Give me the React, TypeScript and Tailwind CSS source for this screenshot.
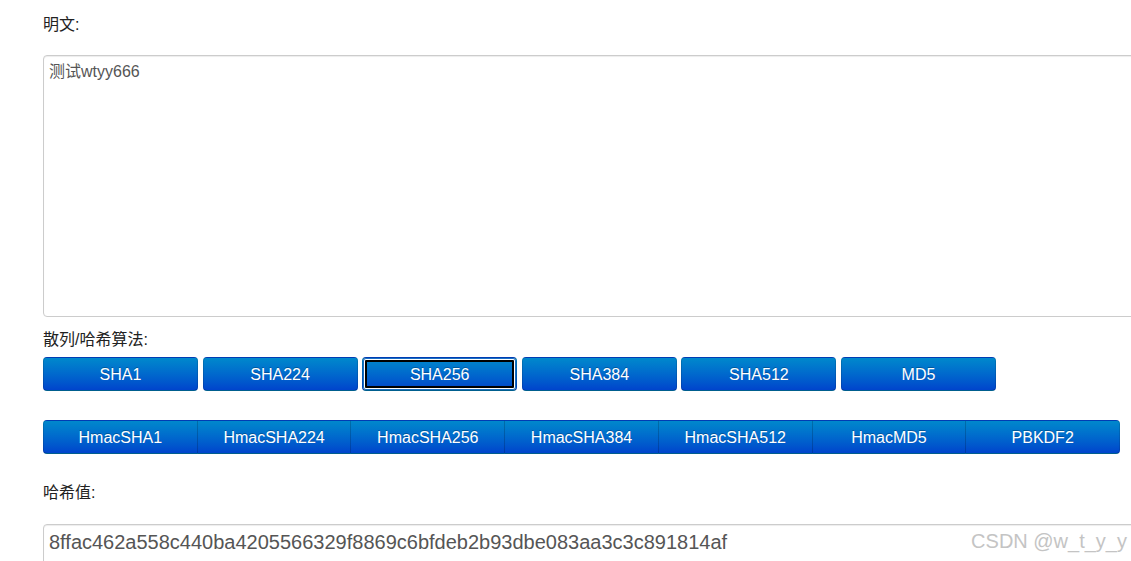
import { useState } from "react"

const algos = ["SHA1", "SHA224", "SHA256", "SHA384", "SHA512", "MD5"]
const hmacs = ["HmacSHA1", "HmacSHA224", "HmacSHA256", "HmacSHA384", "HmacSHA512", "HmacMD5", "PBKDF2"]

const btn =
  "h-[34px] pt-[2px] text-white text-[16px] bg-linear-to-b from-[#0088cc] to-[#0044cc] [text-shadow:0_-1px_0_rgba(0,0,0,0.25)] border border-[rgba(0,0,0,0.12)] border-b-[rgba(0,0,0,0.3)]"

export default function App() {
  const [active, setActive] = useState("SHA256")
  const font = { fontFamily: '"Liberation Sans", Arial, "Noto Sans CJK SC", sans-serif' }

  return (
    <div className="relative w-[1131px] h-[561px] overflow-hidden bg-white text-[#333]" style={font}>
      <div className="pl-[43px] pt-[15px] w-[1200px]">
        {/* 明文 */}
        <div className="text-[16px] leading-[20px] text-[#222]">明文:</div>
        <textarea
          readOnly
          defaultValue="测试wtyy666"
          className="mt-[20px] block w-[1120px] h-[262px] resize-none border border-[#ccc] rounded-[4px] shadow-[inset_0_1px_1px_rgba(0,0,0,0.075)] px-[5px] pt-[6px] text-[16px] leading-[20px] text-[#555] outline-none"
          style={font}
        />

        {/* 算法 */}
        <div className="mt-[13px] text-[16px] leading-[20px] text-[#222]">散列/哈希算法:</div>
        <div className="mt-[7px] flex gap-[4.6px]">
          {algos.map((a) => (
            <button
              key={a}
              onClick={() => setActive(a)}
              className={`${btn} w-[155px] rounded-[4px] ${
                active === a
                  ? "shadow-[inset_0_0_0_1px_#1a6fc4,inset_0_0_0_2px_#ffffff,inset_0_0_0_4px_#000000]"
                  : ""
              }`}
              style={font}
            >
              {a}
            </button>
          ))}
        </div>

        <div className="mt-[29px] flex w-[1077px]">
          {hmacs.map((h, i) => (
            <button
              key={h}
              className={`${btn} flex-1 ${i === 0 ? "rounded-l-[4px]" : "border-l-[rgba(0,0,0,0.18)]"} ${
                i === hmacs.length - 1 ? "rounded-r-[4px]" : "border-r-0"
              }`}
              style={font}
            >
              {h}
            </button>
          ))}
        </div>

        {/* 哈希值 */}
        <div className="mt-[29px] text-[16px] leading-[20px] text-[#222]">哈希值:</div>
        <div className="mt-[21px] w-[1120px] h-[44px] border border-[#ccc] rounded-[4px] shadow-[inset_0_1px_1px_rgba(0,0,0,0.075)] px-[5px] pt-[4px] text-[20px] leading-[26px] text-[#555]">
          8ffac462a558c440ba4205566329f8869c6bfdeb2b93dbe083aa3c3c891814af
        </div>
      </div>

      <div className="absolute right-[4px] top-[528px] text-[20px] leading-[26px] text-[#c4c4c4]">CSDN @w_t_y_y</div>
    </div>
  )
}
